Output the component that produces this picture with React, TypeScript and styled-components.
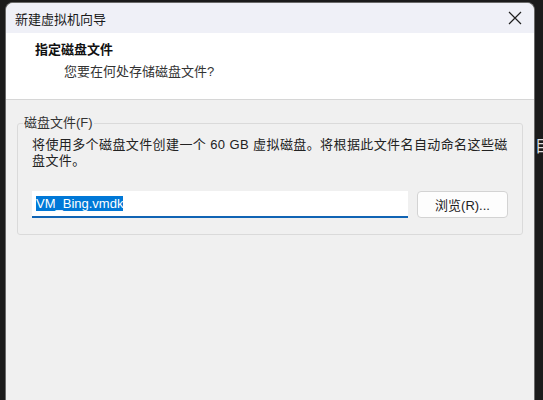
import React from "react";
import styled, { createGlobalStyle } from "styled-components";

const GlobalStyle = createGlobalStyle`
  html, body {
    margin: 0;
    padding: 0;
    background: #1b1b1b;
    overflow: hidden;
  }
  * {
    box-sizing: border-box;
  }
`;

const font = `"Liberation Sans", "Noto Sans CJK SC", sans-serif`;

const Screen = styled.div`
  display: flex;
  height: 400px;
  padding: 2px 0 0 5px;
  font-family: ${font};
  font-size: 13px;
  color: #1a1a1a;
`;

const Dialog = styled.div`
  flex: none;
  width: 530px;
  display: flex;
  flex-direction: column;
  background: #f0f0f0;
  border: 1px solid #6a6a6a;
  border-bottom: none;
  border-radius: 8px 8px 0 0;
  overflow: hidden;
`;

const TitleBar = styled.div`
  height: 30px;
  display: flex;
  align-items: center;
  justify-content: space-between;
  padding: 0 12px 0 9px;
  background: #eff0f7;
`;

const CloseButton = styled.div`
  display: flex;
  width: 14px;
  height: 14px;
`;

const Header = styled.div`
  height: 67px;
  background: #ffffff;
  border-bottom: 1px solid #d6d6d6;
  padding: 7px 0 0 29px;
`;

const Heading = styled.div`
  font-weight: bold;
  line-height: 20px;
  color: #111;
`;

const SubHeading = styled.div`
  margin: 2px 0 0 29px;
  line-height: 20px;
  color: #333;
`;

const Body = styled.div`
  padding: 14px 11px 0;
`;

const Group = styled.fieldset`
  margin: 0;
  min-width: 0;
  border: 1px solid #dadada;
  border-radius: 3px;
  padding: 5px 14px 16px;
`;

const Legend = styled.legend`
  margin-left: -9px;
  padding: 0 1px;
  line-height: 18px;
  color: #333;
`;

const Description = styled.p`
  margin: 0;
  line-height: 16px;
  letter-spacing: 0.4px;
  color: #222;
`;

const FileRow = styled.div`
  display: flex;
  gap: 9px;
  margin-top: 22px;
  height: 27px;
`;

const PathField = styled.div`
  flex: 1;
  display: flex;
  align-items: center;
  background: #ffffff;
  border-bottom: 2px solid #1064b4;
  padding: 0 4px;
`;

const Selected = styled.span<{ $active: boolean }>`
  line-height: 15px;
  background: ${(p) => (p.$active ? "#0078d7" : "transparent")};
  color: ${(p) => (p.$active ? "#ffffff" : "#1a1a1a")};
`;

const BrowseButton = styled.div`
  flex: none;
  width: 91px;
  display: flex;
  align-items: center;
  justify-content: center;
  background: #fdfdfd;
  border: 1px solid #d3d3d3;
  border-radius: 4px;
  color: #222;
`;

const Strip = styled.div`
  flex: none;
  width: 8px;
  overflow: hidden;
  padding-top: 133px;
  font-family: "Noto Sans CJK SC", sans-serif;
  font-size: 16px;
  line-height: 20px;
  color: #dedede;
  white-space: nowrap;
`;

const CloseIcon = () => (
  <svg width="14" height="14" viewBox="0 0 14 14">
    <path d="M1 1 L13 13 M13 1 L1 13" stroke="#1f1f1f" strokeWidth="1.2" />
  </svg>
);

export default function App() {
  return (
    <>
      <GlobalStyle />
      <Screen>
        <Dialog>
          <TitleBar>
            <span>新建虚拟机向导</span>
            <CloseButton>
              <CloseIcon />
            </CloseButton>
          </TitleBar>
          <Header>
            <Heading>指定磁盘文件</Heading>
            <SubHeading>您要在何处存储磁盘文件?</SubHeading>
          </Header>
          <Body>
            <Group>
              <Legend>磁盘文件(F)</Legend>
              <Description>
                将使用多个磁盘文件创建一个 60 GB 虚拟磁盘。将根据此文件名自动命名这些磁
                <br />
                盘文件。
              </Description>
              <FileRow>
                <PathField>
                  <Selected $active>VM_Bing.vmdk</Selected>
                </PathField>
                <BrowseButton>浏览(R)...</BrowseButton>
              </FileRow>
            </Group>
          </Body>
        </Dialog>
        <Strip>目</Strip>
      </Screen>
    </>
  );
}
